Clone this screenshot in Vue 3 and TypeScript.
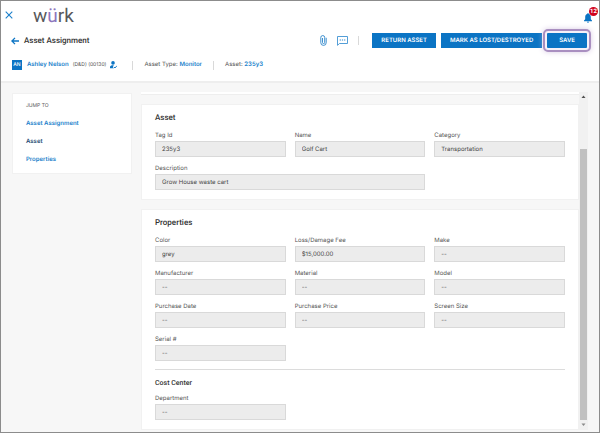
<script setup lang="ts">
interface Field {
  id: string
  label: string
  value: string
  wide?: boolean
}

const jumpLinks = [
  { label: 'Asset Assignment', target: '#assignment', current: false },
  { label: 'Asset', target: '#asset', current: true },
  { label: 'Properties', target: '#properties', current: false },
]

const assetFields: Field[] = [
  { id: 'tag-id', label: 'Tag Id', value: '235y3' },
  { id: 'name', label: 'Name', value: 'Golf Cart' },
  { id: 'category', label: 'Category', value: 'Transportation' },
  { id: 'description', label: 'Description', value: 'Grow House waste cart', wide: true },
]

const propertyFields: Field[] = [
  { id: 'color', label: 'Color', value: 'grey' },
  { id: 'fee', label: 'Loss/Damage Fee', value: '$15,000.00' },
  { id: 'make', label: 'Make', value: '--' },
  { id: 'manufacturer', label: 'Manufacturer', value: '--' },
  { id: 'material', label: 'Material', value: '--' },
  { id: 'model', label: 'Model', value: '--' },
  { id: 'purchase-date', label: 'Purchase Date', value: '--' },
  { id: 'purchase-price', label: 'Purchase Price', value: '--' },
  { id: 'screen-size', label: 'Screen Size', value: '--' },
  { id: 'serial', label: 'Serial #', value: '--' },
]

const costFields: Field[] = [{ id: 'department', label: 'Department', value: '--' }]
</script>

<template>
  <div class="app">
    <header class="header">
      <div class="brand-row">
        <button class="icon-button" type="button" aria-label="Close">
          <svg width="8" height="8" viewBox="0 0 8 8"><path d="M.7.7l6.600 6.600M7.300.7L.7 7.300" fill="none" stroke="#1b7fcb" stroke-width="1.100" /></svg>
        </button>
        <div class="logo">w<span class="accent">ü</span>rk</div>
        <button class="icon-button bell" type="button" aria-label="Notifications">
          <svg width="8" height="10" viewBox="0 0 8 10"><path d="M4 0a.7.7 0 0 1 .7.7v.4C6 1.400 6.800 2.500 6.800 4v2.300L8 7.600v.6H0v-.6l1.200-1.300V4c0-1.500.8-2.600 2.100-2.900V.7A.7.7 0 0 1 4 0zM3 8.800h2a1 1 0 0 1-2 0z" fill="#0b74c4" /></svg>
          <span class="badge">12</span>
        </button>
      </div>

      <div class="title-row">
        <button class="icon-button" type="button" aria-label="Back">
          <svg width="8" height="8" viewBox="0 0 8 8"><path d="M8 4H1M4 .9L.9 4 4 7.100" fill="none" stroke="#0b74c4" stroke-width="1.300" /></svg>
        </button>
        <h1>Asset Assignment</h1>
        <div class="tools">
          <button class="icon-button" type="button" aria-label="Attachments">
            <svg width="7" height="11" viewBox="0 0 7 11"><path d="M6.200 2.800v4.900a2.700 2.700 0 0 1-5.400 0V2.500a1.900 1.900 0 0 1 3.900 0v5a1.100 1.100 0 0 1-2.200 0V3" fill="none" stroke="#2a85ca" stroke-width=".9" /></svg>
          </button>
          <button class="icon-button" type="button" aria-label="Comments">
            <svg width="11" height="10" viewBox="0 0 11 10"><path d="M.5.500h10v7H2.400L.5 9.400z" fill="none" stroke="#3f93d2" stroke-width=".9" /><path d="M2.700 4h1.200M4.900 4h1.200M7.100 4h1.200" stroke="#2a85ca" stroke-width="1.100" /></svg>
          </button>
          <span class="rule"></span>
        </div>
        <div class="actions">
          <button class="action" type="button">RETURN ASSET</button>
          <button class="action" type="button">MARK AS LOST/DESTROYED</button>
          <button class="action save" type="button">SAVE</button>
        </div>
      </div>

      <div class="info-row">
        <span class="avatar">AN</span>
        <a class="person" href="#employee">Ashley Nelson</a>
        <span class="code">(D&amp;D) (00130)</span>
        <svg class="user-icon" width="7" height="8" viewBox="0 0 7 8"><circle cx="3" cy="1.900" r="1.800" fill="#0b74c4" /><path d="M0 7.300V6c0-1.200 1.300-1.800 3-1.800l.8.1-1 1.900L4 7.300z" fill="#0b74c4" /><path d="M4 6l1 1 2-2.300" fill="none" stroke="#0b74c4" stroke-width=".9" /></svg>
        <span class="rule"></span>
        <span class="fact">Asset Type: <a href="#type">Monitor</a></span>
        <span class="rule"></span>
        <span class="fact">Asset: <a href="#item">235y3</a></span>
      </div>
    </header>

    <div class="body">
      <nav class="jump" aria-label="Jump to">
        <p>JUMP TO</p>
        <a v-for="link in jumpLinks" :key="link.target" :href="link.target" :class="{ current: link.current }">{{ link.label }}</a>
      </nav>

      <div class="scroller">
        <main class="cards">
          <div id="assignment" class="card-end"></div>

          <section id="asset" class="card">
            <h2>Asset</h2>
            <div class="grid">
              <div v-for="f in assetFields" :key="f.id" class="field" :class="{ wide: f.wide }">
                <label :for="f.id">{{ f.label }}</label>
                <input :id="f.id" type="text" :value="f.value" readonly />
              </div>
            </div>
          </section>

          <section id="properties" class="card">
            <h2>Properties</h2>
            <div class="grid">
              <div v-for="f in propertyFields" :key="f.id" class="field">
                <label :for="f.id">{{ f.label }}</label>
                <input :id="f.id" type="text" :value="f.value" readonly />
              </div>
            </div>
            <hr />
            <h3>Cost Center</h3>
            <div class="grid">
              <div v-for="f in costFields" :key="f.id" class="field">
                <label :for="f.id">{{ f.label }}</label>
                <input :id="f.id" type="text" :value="f.value" readonly />
              </div>
            </div>
          </section>
        </main>

        <div class="scrollbar" aria-hidden="true">
          <svg width="9" height="10" viewBox="0 0 9 10"><path d="M2.500 6h4L4.500 3.500z" fill="#505050" /></svg>
          <div class="before"></div>
          <div class="thumb"></div>
          <svg width="9" height="10" viewBox="0 0 9 10"><path d="M2.500 3.500h4L4.500 6z" fill="#8a8a8a" /></svg>
        </div>
      </div>
    </div>
  </div>
</template>

<style>
body {
  margin: 0;
}
</style>

<style scoped>
.app,
.app * {
  box-sizing: border-box;
  text-rendering: geometricPrecision;
}

.app {
  display: flex;
  flex-direction: column;
  min-height: 100vh;
  border: 1px solid #8c8c8c;
  background: #f7f7f7;
  color: #555;
  font: 6px/10px Inter, "Liberation Sans", sans-serif;
}

a {
  color: #1b7fcb;
  font-weight: 600;
  text-decoration: none;
}

h1,
h2,
h3,
p {
  margin: 0;
}

svg {
  display: block;
}

.header {
  background: #fff;
  border-bottom: 2px solid #eee;
  padding-bottom: 11px;
}

.icon-button {
  position: relative;
  display: block;
  border: 0;
  padding: 0;
  background: none;
}

.brand-row {
  display: flex;
  align-items: center;
  height: 27px;
  padding: 0 7px 0 4px;
}

.logo {
  margin: 2px 0 0 20px;
  color: #58595b;
  font: 19px/24px Roboto, "Liberation Sans", sans-serif;
}

.accent {
  color: #8d76bd;
}

.bell {
  margin: 6px 0 0 auto;
}

.badge {
  position: absolute;
  top: -6px;
  left: 5px;
  width: 9px;
  height: 9px;
  border-radius: 50%;
  background: #d0021b;
  color: #fff;
  font: 700 6px/9px Roboto, sans-serif;
  text-align: center;
}

.title-row {
  display: flex;
  align-items: center;
  height: 25px;
  padding: 0 12px 0 10px;
}

h1 {
  margin-left: 5px;
  color: #333;
  font: 500 8px/10px Roboto, "Liberation Sans", sans-serif;
}

.tools {
  display: flex;
  align-items: center;
  gap: 10px;
  margin-left: auto;
}

.rule {
  width: 1px;
  height: 9px;
  background: #d9d9d9;
}

.actions {
  display: flex;
  gap: 5px;
  margin-left: 13px;
}

.action {
  height: 15px;
  padding: 0 9px;
  border: 0;
  background: #0b74c4;
  color: #fff;
  font: 600 6px/15px Inter, "Liberation Sans", sans-serif;
  white-space: nowrap;
}

.save {
  padding: 0 12px;
  outline: 2px solid #a98fc0;
  outline-offset: 2px;
  border-radius: 1px;
  box-shadow: 0 0 0 2px #f6f1f9, 0 0 6px 3px #cbb9da;
}

.info-row {
  display: flex;
  align-items: center;
  height: 10px;
  margin-top: 7px;
  padding-left: 11px;
}

.avatar {
  width: 10px;
  height: 10px;
  background: #0b74c4;
  color: #fff;
  font-size: 5px;
  font-weight: 500;
  text-align: center;
}

.person {
  margin-left: 5px;
}

.code {
  margin-left: 4px;
  font-size: 5px;
}

.user-icon {
  margin: 0 15px 0 4px;
}

.fact {
  margin: 0 11px;
}

.body {
  display: flex;
  flex: 1;
  align-items: flex-start;
  gap: 9px;
  padding: 9px 11px 2px;
}

.jump {
  display: flex;
  flex: 0 0 120px;
  flex-direction: column;
  gap: 8px;
  margin-top: 1px;
  padding: 7px 13px 8px;
  border: 1px solid #f1f1f1;
  background: #fff;
}

.jump p {
  font-size: 5px;
}

.jump .current {
  color: #1f4b73;
}

.scroller {
  display: flex;
  flex: 1;
  min-width: 0;
}

.cards {
  display: flex;
  flex: 1;
  flex-direction: column;
  gap: 9px;
  min-width: 0;
}

.card-end {
  height: 3px;
  border-bottom: 1px solid #eee;
  background: #fff;
}

.card {
  padding: 8px 13px 9px;
  border: 1px solid #f1f1f1;
  background: #fff;
}

h2 {
  margin-bottom: 8px;
  color: #333;
  font: 500 8px/10px Roboto, "Liberation Sans", sans-serif;
}

h3 {
  margin-bottom: 6px;
  color: #333;
  font: 500 7px/10px Roboto, "Liberation Sans", sans-serif;
}

.grid {
  display: grid;
  grid-template-columns: repeat(3, minmax(0, 1fr));
  gap: 7px 9px;
}

.field {
  display: flex;
  flex-direction: column;
}

.wide {
  grid-column: span 2;
}

input {
  width: 100%;
  height: 16px;
  padding: 0 6px;
  border: 1px solid #d9d9d9;
  border-radius: 0;
  background: #ececec;
  color: #444;
  font: 6px/14px Inter, "Liberation Sans", sans-serif;
}

hr {
  margin: 8px 0;
  border: 0;
  border-top: 1px solid #dcdcdc;
}

.scrollbar {
  display: flex;
  flex: 0 0 9px;
  flex-direction: column;
  background: #f1f1f1;
}

.before {
  flex: 47;
}

.thumb {
  flex: 271;
  margin: 0 1px;
  background: #c1c1c1;
}
</style>
